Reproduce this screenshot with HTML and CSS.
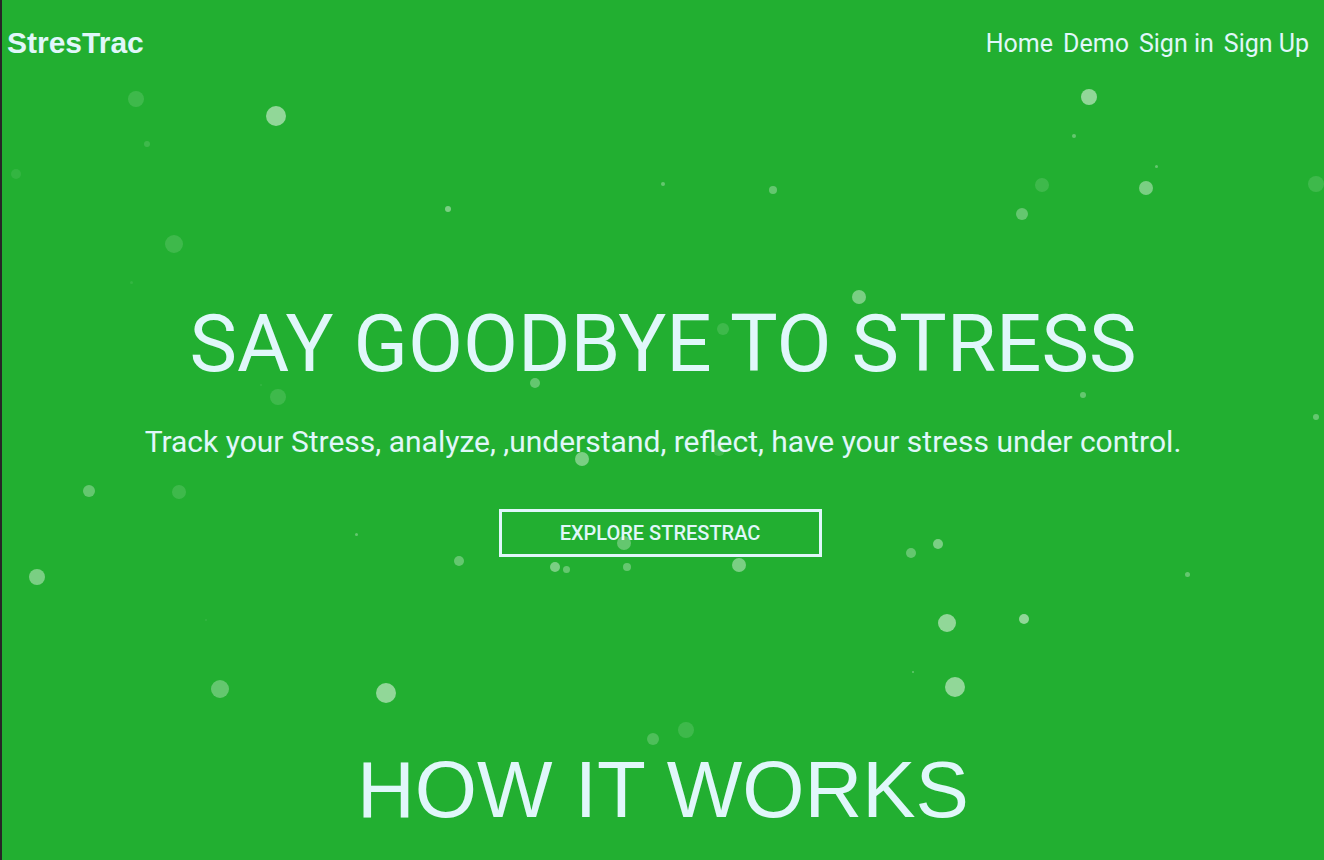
FILE: index.html
```html
<!DOCTYPE html>
<html lang="en">
<head>
<meta charset="utf-8">
<title>StresTrac</title>
<link rel="stylesheet" href="styles.css">
</head>
<body>
<div class="page">
  <header class="topbar">
    <a class="logo" href="#">StresTrac</a>
    <nav class="nav">
      <a href="#">Home</a>
      <a href="#">Demo</a>
      <a href="#">Sign in</a>
      <a href="#">Sign Up</a>
    </nav>
  </header>

  <main class="hero">
    <h1 class="headline">SAY GOODBYE TO STRESS</h1>
    <p class="tagline">Track your Stress, analyze, ,understand, reflect, have your stress under control.</p>
    <a class="cta" href="#">EXPLORE STRESTRAC</a>
    <h2 class="section-title">HOW IT WORKS</h2>
  </main>

  <div class="particles" aria-hidden="true">
    <span class="p f2" style="left:136px;top:99px;--r:8px"></span>
    <span class="p b5" style="left:276px;top:116px;--r:10px"></span>
    <span class="p f2" style="left:147px;top:144px;--r:3px"></span>
    <span class="p f1" style="left:16px;top:174px;--r:5px"></span>
    <span class="p b4" style="left:448px;top:209px;--r:3px"></span>
    <span class="p f2" style="left:174px;top:244px;--r:9px"></span>
    <span class="p f1" style="left:131px;top:282px;--r:1.5px"></span>
    <span class="p b5" style="left:1089px;top:97px;--r:8px"></span>
    <span class="p b3" style="left:1074px;top:136px;--r:2px"></span>
    <span class="p b3" style="left:1156px;top:166px;--r:1.5px"></span>
    <span class="p b3" style="left:663px;top:184px;--r:2px"></span>
    <span class="p b3" style="left:773px;top:190px;--r:4px"></span>
    <span class="p f2" style="left:1042px;top:185px;--r:7px"></span>
    <span class="p b4" style="left:1146px;top:188px;--r:7px"></span>
    <span class="p b3" style="left:1022px;top:214px;--r:6px"></span>
    <span class="p f2" style="left:1316px;top:184px;--r:8px"></span>
    <span class="p b4" style="left:859px;top:297px;--r:7px"></span>
    <span class="p f2" style="left:723px;top:329px;--r:6px"></span>
    <span class="p f2" style="left:278px;top:397px;--r:8px"></span>
    <span class="p f1" style="left:261px;top:385px;--r:1px"></span>
    <span class="p b3" style="left:89px;top:491px;--r:6px"></span>
    <span class="p f2" style="left:179px;top:492px;--r:7px"></span>
    <span class="p b3" style="left:356px;top:534px;--r:1.5px"></span>
    <span class="p b4" style="left:37px;top:577px;--r:8px"></span>
    <span class="p b3" style="left:459px;top:561px;--r:5px"></span>
    <span class="p b3" style="left:220px;top:689px;--r:9px"></span>
    <span class="p b5" style="left:386px;top:693px;--r:10px"></span>
    <span class="p f1" style="left:206px;top:620px;--r:1px"></span>
    <span class="p b3" style="left:535px;top:383px;--r:5px"></span>
    <span class="p b3" style="left:1083px;top:395px;--r:3px"></span>
    <span class="p b3" style="left:1316px;top:417px;--r:3px"></span>
    <span class="p b4" style="left:582px;top:459px;--r:7px"></span>
    <span class="p f2" style="left:719px;top:450px;--r:6px"></span>
    <span class="p b3" style="left:624px;top:543px;--r:7px"></span>
    <span class="p b4" style="left:555px;top:567px;--r:5px"></span>
    <span class="p b3" style="left:566px;top:569px;--r:3.5px"></span>
    <span class="p b3" style="left:627px;top:567px;--r:4px"></span>
    <span class="p b4" style="left:739px;top:565px;--r:7px"></span>
    <span class="p b3" style="left:911px;top:553px;--r:5px"></span>
    <span class="p b4" style="left:938px;top:544px;--r:5px"></span>
    <span class="p b3" style="left:1187px;top:574px;--r:2.5px"></span>
    <span class="p b5" style="left:947px;top:623px;--r:9px"></span>
    <span class="p b5" style="left:1024px;top:619px;--r:5px"></span>
    <span class="p b3" style="left:913px;top:672px;--r:1px"></span>
    <span class="p b5" style="left:955px;top:687px;--r:10px"></span>
    <span class="p f2" style="left:686px;top:730px;--r:8px"></span>
    <span class="p f3" style="left:653px;top:739px;--r:6px"></span>
  </div>
</div>
</body>
</html>
```

FILE: styles.css
```css
* {
  box-sizing: border-box;
}

html,
body {
  margin: 0;
  padding: 0;
  background: #22af31;
}

.page {
  position: relative;
  height: 860px;
  overflow: hidden;
  background: #22af31;
  border-left: 2px solid #262626;
  color: #e0f7fa;
}

.topbar {
  display: flex;
  justify-content: space-between;
  align-items: center;
  height: 86px;
  padding: 0 15px 0 5px;
}

.logo {
  font-family: "Liberation Sans", Arial, sans-serif;
  font-weight: 700;
  font-size: 30px;
  line-height: 1;
  color: #e0f7fa;
  text-decoration: none;
}

.nav {
  display: flex;
  gap: 10px;
}

.nav a {
  font-family: Roboto, "Noto Sans", sans-serif;
  font-size: 25px;
  line-height: 1;
  color: #e0f7fa;
  text-decoration: none;
}

.hero {
  display: flex;
  flex-direction: column;
  align-items: center;
  text-align: center;
}

.headline {
  margin: 218px 0 0;
  font-family: Roboto, "Noto Sans", sans-serif;
  font-weight: 400;
  font-size: 80px;
  line-height: 1;
  letter-spacing: 0;
}

.tagline {
  margin: 43px 0 0;
  font-family: Roboto, "Noto Sans", sans-serif;
  font-size: 30px;
  line-height: 1;
}

.cta {
  margin: 52px 0 0 -6px;
  display: flex;
  align-items: center;
  justify-content: center;
  width: 323px;
  height: 48px;
  border: 3px solid #e0f7fa;
  font-family: Roboto, "Noto Sans", sans-serif;
  font-weight: 500;
  font-size: 20px;
  color: #e0f7fa;
  text-decoration: none;
}

.section-title {
  margin: 193px 0 0;
  font-family: "Liberation Sans", Arial, sans-serif;
  font-weight: 400;
  font-size: 80px;
  line-height: 1;
}

.particles {
  position: absolute;
  top: 0;
  left: -2px;
  right: 0;
  bottom: 0;
  pointer-events: none;
}

.p {
  position: absolute;
  width: calc(var(--r) * 2);
  height: calc(var(--r) * 2);
  margin-left: calc(var(--r) * -1);
  margin-top: calc(var(--r) * -1);
  border-radius: 50%;
  background: #fff;
}

.f1 { opacity: 0.08; }
.f2 { opacity: 0.13; }
.f3 { opacity: 0.2; }
.b3 { opacity: 0.3; }
.b4 { opacity: 0.4; }
.b5 { opacity: 0.5; }
```
